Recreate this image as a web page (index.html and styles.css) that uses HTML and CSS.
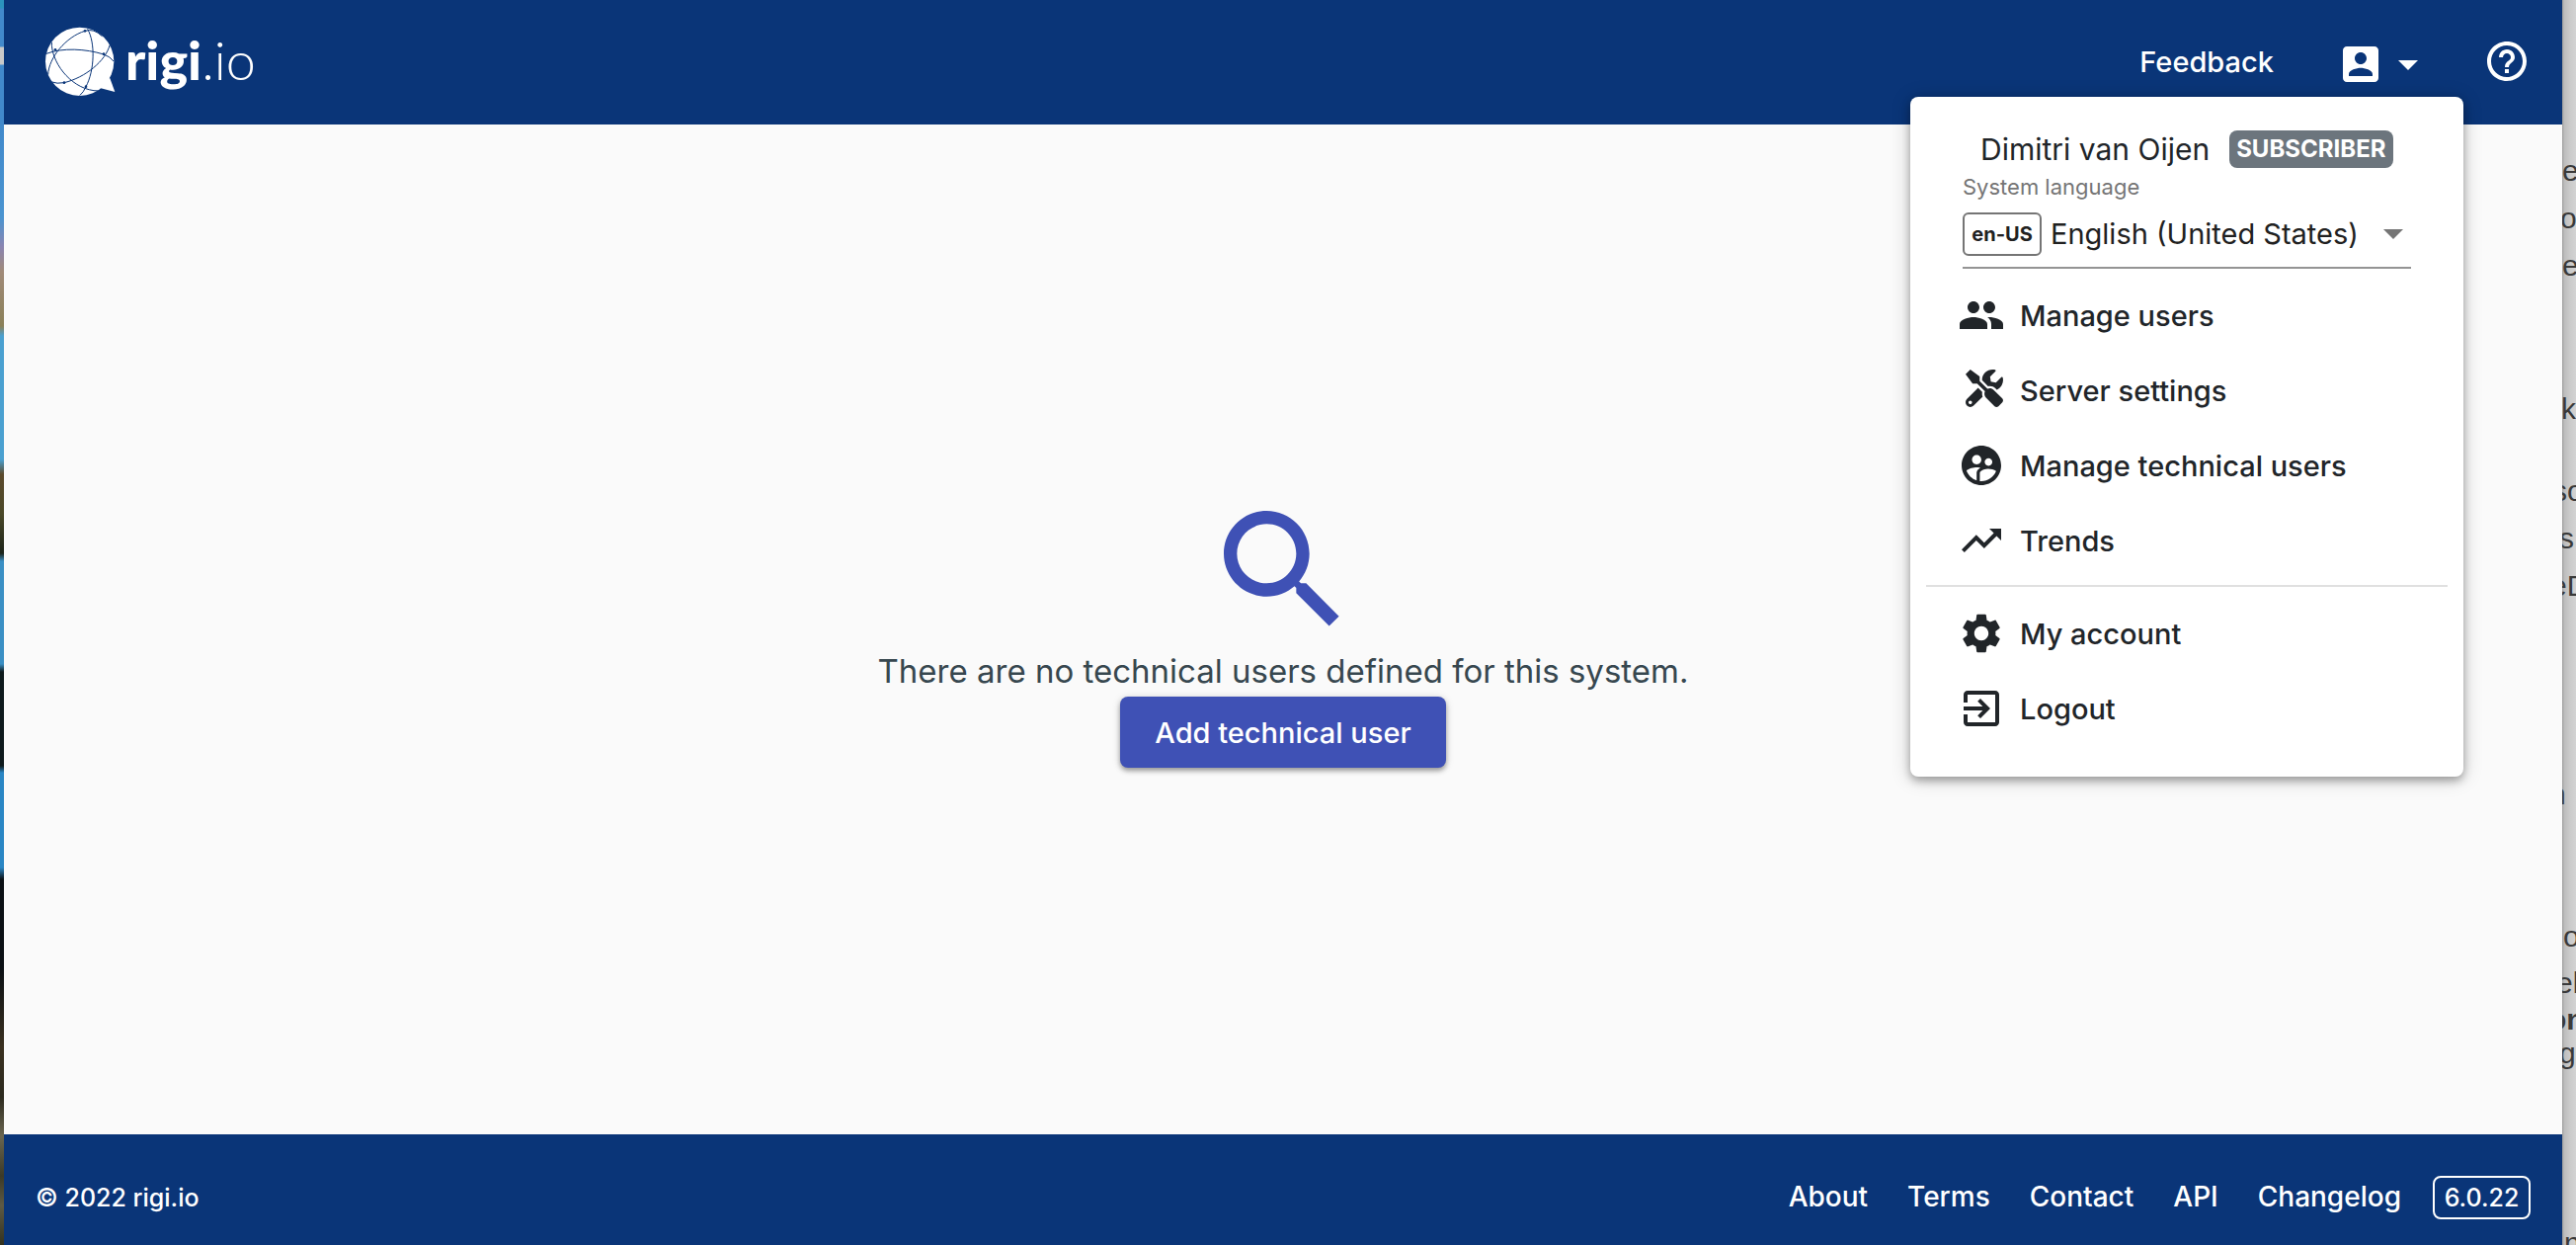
FILE: index.html
```html
<!DOCTYPE html>
<html lang="en">
<head>
<meta charset="utf-8">
<meta name="viewport" content="width=device-width, initial-scale=1">
<title>Technical users - rigi.io</title>
<link rel="stylesheet" href="styles.css">
</head>
<body>
<div class="wallpaper" aria-hidden="true"></div>

<div class="app">
  <header class="topbar">
    <a class="logo" href="#" aria-label="rigi.io">
      <svg class="logo-mark" viewBox="0 0 270 255" aria-hidden="true">
        <circle cx="122" cy="127" r="104" fill="#fff"/>
        <path fill="#fff" d="M214 178 229 219 186 208 150 170Z"/>
        <g fill="none" stroke="#0a3578" stroke-width="3">
          <path d="M21 103C70 84 140 88 195 105Q215 112 225 126"/>
          <path d="M37 68C35 125 90 205 165 215Q178 218 192 212"/>
          <path d="M26 167C28 115 80 52 138 34Q165 25 190 50"/>
          <path d="M146 28C170 70 167 155 141 203Q134 220 122 230"/>
          <path d="M213 78C200 125 140 175 75 191Q52 195 38 189"/>
        </g>
        <g fill="#0a3578"><circle cx="138" cy="34" r="4"/><circle cx="48" cy="91" r="4"/><circle cx="195" cy="104" r="4"/><circle cx="75" cy="191" r="4"/><circle cx="141" cy="203" r="4"/></g>
      </svg>
      <span class="logo-text"><b>rigi</b><span>.io</span></span>
    </a>
    <nav class="top-actions" aria-label="Main">
      <a class="feedback" href="#">Feedback</a>
      <button class="account" type="button" aria-label="Account menu" aria-expanded="true">
        <svg class="icon" viewBox="0 0 24 24"><path d="M3 5v14c0 1.100.89 2 2 2h14c1.100 0 2-.9 2-2V5c0-1.100-.9-2-2-2H5c-1.110 0-2 .9-2 2zm12 4c0 1.660-1.340 3-3 3s-3-1.340-3-3 1.340-3 3-3 3 1.340 3 3zm-9 8c0-2 4-3.100 6-3.100s6 1.100 6 3.100v1H6v-1z"/></svg>
        <svg class="icon" viewBox="0 0 24 24"><path d="M7 10l5 5 5-5z"/></svg>
      </button>
      <button class="help" type="button" aria-label="Help">
        <svg class="icon" viewBox="0 0 24 24"><path d="M11 18h2v-2h-2v2zm1-16C6.480 2 2 6.480 2 12s4.480 10 10 10 10-4.480 10-10S17.520 2 12 2zm0 18c-4.410 0-8-3.590-8-8s3.590-8 8-8 8 3.590 8 8-3.590 8-8 8zm0-14c-2.210 0-4 1.790-4 4h2c0-1.100.9-2 2-2s2 .9 2 2c0 2-3 1.750-3 5h2c0-2.250 3-2.500 3-5 0-2.210-1.790-4-4-4z"/></svg>
      </button>
    </nav>

    <div class="menu">
      <div class="user"><span class="user-name">Dimitri van Oijen</span><span class="role">SUBSCRIBER</span></div>
      <div class="language">
        <label for="language">System language</label>
        <div class="language-field">
          <span class="locale">en-US</span>
          <select id="language"><option>English (United States)</option></select>
          <svg class="caret" viewBox="0 0 20 10" aria-hidden="true"><path d="M0 0h20L10 10z"/></svg>
        </div>
      </div>
      <ul class="menu-list">
        <li><a href="#"><svg class="icon" viewBox="0 0 24 24"><path d="M16 11c1.660 0 2.990-1.340 2.990-3S17.660 5 16 5c-1.660 0-3 1.340-3 3s1.340 3 3 3zm-8 0c1.660 0 2.990-1.340 2.990-3S9.660 5 8 5C6.340 5 5 6.340 5 8s1.340 3 3 3zm0 2c-2.330 0-7 1.170-7 3.500V19h14v-2.500c0-2.330-4.670-3.500-7-3.500zm8 0c-.29 0-.62.02-.97.05 1.160.84 1.970 1.970 1.970 3.450V19h6v-2.500c0-2.330-4.670-3.500-7-3.500z"/></svg>Manage users</a></li>
        <li><a href="#"><svg class="icon" viewBox="-108 -40 647 647"><path d="M501.100 395.700L384 278.600c-23.100-23.100-57.600-27.600-85.400-13.900L192 158.100V96L64 0 0 64l96 128h62.100l106.600 106.600c-13.600 27.800-9.200 62.300 13.900 85.400l117.100 117.100c14.600 14.600 38.200 14.600 52.700 0l52.700-52.700c14.500-14.600 14.500-38.200 0-52.700zM331.700 225c28.300 0 54.900 11 74.900 31l19.400 19.400c15.800-6.900 30.800-16.500 43.800-29.500 37.100-37.100 49.700-89.300 37.900-136.700-2.200-9-13.500-12.100-20.100-5.500l-74.400 74.400-67.900-11.300L334 98.900l74.400-74.400c6.600-6.600 3.400-17.900-5.700-20.200-47.400-11.700-99.600.9-136.600 37.900-28.500 28.500-41.900 66.100-41.200 103.600l82.100 82.100c8.100-1.900 16.500-2.900 24.700-2.900zm-103.900 82l-56.700-56.700L18.700 402.800c-25 25-25 65.500 0 90.500s65.500 25 90.500 0l123.600-123.600c-7.600-19.900-9.900-41.600-5-62.700zM64 472c-13.200 0-24-10.800-24-24 0-13.300 10.700-24 24-24s24 10.700 24 24c0 13.200-10.700 24-24 24z"/></svg>Server settings</a></li>
        <li><a href="#"><svg class="icon" viewBox="0 0 24 24"><path d="M12 2C6.480 2 2 6.480 2 12s4.480 10 10 10 10-4.480 10-10S17.520 2 12 2zm3.610 6.340c1.070 0 1.930.86 1.930 1.930 0 1.070-.86 1.930-1.930 1.930-1.070 0-1.930-.86-1.930-1.930-.01-1.070.86-1.930 1.930-1.930zm-6-1.580c1.300 0 2.360 1.060 2.360 2.360 0 1.300-1.060 2.360-2.360 2.360s-2.360-1.060-2.360-2.360c0-1.310 1.050-2.360 2.360-2.360zm0 9.130v3.750c-2.400-.75-4.300-2.600-5.140-4.960 1.050-1.120 3.670-1.690 5.140-1.690.53 0 1.200.08 1.900.22-1.640.87-1.900 2.020-1.900 2.680zM12 20c-.27 0-.53-.01-.79-.04v-4.070c0-1.420 2.940-2.130 4.400-2.130 1.070 0 2.920.39 3.840 1.150-1.170 2.970-4.060 5.090-7.450 5.090z"/></svg>Manage technical users</a></li>
        <li><a href="#"><svg class="icon" viewBox="0 0 24 24"><path d="M16 6l2.290 2.290-4.880 4.880-4-4L2 16.590 3.410 18l6-6 4 4 6.300-6.290L22 12V6z"/></svg>Trends</a></li>
      </ul>
      <hr>
      <ul class="menu-list">
        <li><a href="#"><svg class="icon" viewBox="0 0 24 24"><path d="M19.140 12.940c.04-.3.06-.61.06-.94 0-.32-.02-.64-.07-.94l2.030-1.580c.18-.14.23-.41.12-.61l-1.920-3.320c-.12-.22-.37-.29-.59-.22l-2.390.96c-.5-.38-1.030-.7-1.620-.94l-.36-2.540c-.04-.24-.24-.41-.48-.41h-3.840c-.24 0-.43.17-.47.41l-.36 2.540c-.59.24-1.130.57-1.620.94l-2.390-.96c-.22-.08-.47 0-.59.22L2.740 8.870c-.12.21-.08.47.12.61l2.030 1.580c-.05.3-.09.63-.09.94s.02.64.07.94l-2.030 1.580c-.18.14-.23.41-.12.61l1.920 3.320c.12.22.37.29.59.22l2.390-.96c.5.38 1.030.7 1.620.94l.36 2.540c.05.24.24.41.48.41h3.840c.24 0 .44-.17.47-.41l.36-2.540c.59-.24 1.130-.56 1.620-.94l2.390.96c.22.08.47 0 .59-.22l1.920-3.320c.12-.22.07-.47-.12-.61l-2.010-1.580zM12 15.600c-1.980 0-3.600-1.620-3.600-3.600s1.620-3.600 3.600-3.600 3.600 1.620 3.600 3.600-1.620 3.600-3.600 3.600z"/></svg>My account</a></li>
        <li><a href="#"><svg class="icon" viewBox="0 0 24 24"><path d="M10.090 15.590L11.500 17l5-5-5-5-1.410 1.410L12.670 11H3v2h9.670l-2.580 2.590zM19 3H5c-1.110 0-2 .9-2 2v4h2V5h14v14H5v-4H3v4c0 1.100.89 2 2 2h14c1.100 0 2-.9 2-2V5c0-1.100-.9-2-2-2z"/></svg>Logout</a></li>
      </ul>
    </div>
  </header>

  <main class="empty">
    <svg class="empty-icon" viewBox="0 0 24 24" aria-hidden="true"><path d="M15.500 14h-.79l-.28-.27C15.410 12.590 16 11.110 16 9.500 16 5.910 13.090 3 9.500 3S3 5.910 3 9.500 5.910 16 9.500 16c1.610 0 3.090-.59 4.230-1.570l.27.28v.79l5 4.990L20.490 19l-4.990-5zm-6 0C7.010 14 5 11.990 5 9.500S7.010 5 9.500 5 14 7.010 14 9.500 11.990 14 9.500 14z"/></svg>
    <p>There are no technical users defined for this system.</p>
    <button class="primary" type="button">Add technical user</button>
  </main>

  <footer class="footer">
    <span>© 2022 rigi.io</span>
    <nav class="footer-links" aria-label="Footer">
      <a href="#">About</a>
      <a href="#">Terms</a>
      <a href="#">Contact</a>
      <a href="#">API</a>
      <a href="#">Changelog</a>
    </nav>
    <span class="version">6.0.22</span>
  </footer>
</div>

<div class="behind" aria-hidden="true">
  <span class="l1">e</span>
  <span class="l2">o</span>
  <span class="l3">e</span>
  <span class="l4">k</span>
  <span class="l5">so</span>
  <span class="l6">s</span>
  <span class="l7">eD</span>
  <span class="l8">n</span>
  <span class="l9">o</span>
  <span class="l10">el</span>
  <span class="l11">on</span>
  <span class="l12">g</span>
  <span class="l13">n</span>
</div>
</body>
</html>
```
FILE: styles.css
```css
* { box-sizing: border-box; }

body {
  margin: 0;
  min-height: 100vh;
  display: flex;
  font-family: Inter, "Open Sans", sans-serif;
  font-size: 29px;
  font-weight: 500;
  color: #212529;
}

a { color: inherit; text-decoration: none; }
button {
  border: 0;
  padding: 0;
  background: none;
  font: inherit;
  color: inherit;
  cursor: pointer;
}
.icon { flex: none; display: block; width: 48px; height: 48px; fill: currentColor; }

/* desktop showing at the left edge of the window */
.wallpaper {
  flex: none;
  width: 4px;
  background: linear-gradient(#2b93bd 0 8px, #4189cb 9px 47px, #c9c9c9 48px 65px, #4189cb 66px 130px, #4a94d0 220px, #8a84b0 250px, #a08a78 275px, #8a8058 330px, #4aa0d0 340px 465px, #5c4a2c 480px, #4a4828 520px, #1c241a 560px, #3a8fc4 568px 672px, #0e1a1c 680px 775px, #2a86c4 782px 878px, #0b1014 890px 980px, #3a3020 1060px, #2c2a1e 1110px, #6a6650 1150px, #3c3a26 1190px, #5e5a44 1220px, #33321f 1260px);
}

.app {
  flex: 1;
  min-width: 0;
  min-height: 100vh;
  display: flex;
  flex-direction: column;
  background: #fafafa;
}

.topbar {
  position: relative;
  display: flex;
  align-items: center;
  justify-content: space-between;
  height: 126px;
  padding: 0 32px 2px 36px;
  background: #0a3578;
  color: #fff;
}
.logo { display: flex; align-items: center; }
.logo-mark { width: 90px; height: 85px; }
.logo-text { margin-left: -3px; padding-bottom: 3px; font: 54px/60px Lato, sans-serif; }
.logo-text b { font-weight: 900; }
.logo-text span { font-weight: 300; }

.top-actions { display: flex; align-items: center; }
.account { display: flex; margin: 6px 52px 0 64px; }

.menu {
  position: absolute;
  z-index: 1;
  top: 98px;
  right: 100px;
  width: 560px;
  padding: 34px 0 31px;
  border-radius: 8px;
  background: #fff;
  color: #212529;
  box-shadow: 0 4px 8px rgba(0, 0, 0, .3), 0 2px 20px rgba(0, 0, 0, .2);
}
.user { display: flex; align-items: center; height: 38px; padding-left: 71px; }
.user-name { font-size: 30px; font-weight: 400; }
.role {
  margin-left: 20px;
  padding: 0 7px;
  border-radius: 8px;
  background: #6c757d;
  color: #fff;
  font-size: 24px;
  font-weight: 700;
  line-height: 38px;
}
.language { margin: 6px 53px 0; border-bottom: 2px solid #949494; }
.language label {
  display: block;
  color: #757575;
  font-size: 22px;
  font-weight: 400;
  line-height: 26px;
}
.language-field { display: flex; align-items: center; padding: 13px 8px 11px 0; }
.locale {
  width: 80px;
  border: 2px solid #757575;
  border-radius: 6px;
  color: #212121;
  font-size: 20px;
  font-weight: 700;
  line-height: 40px;
  text-align: center;
}
.language select {
  appearance: none;
  flex: 1;
  min-width: 0;
  margin-left: 9px;
  padding: 0 0 2px;
  border: 0;
  background: none;
  color: #212121;
  font: inherit;
  font-weight: 400;
}
.caret { width: 20px; height: 10px; fill: #757575; }

.menu-list { margin: 9px 0 0; padding: 0; list-style: none; }
.menu-list a {
  display: flex;
  align-items: center;
  gap: 15px;
  height: 76px;
  padding: 0 48px;
}
.menu hr { height: 2px; margin: 7px 16px 0; border: 0; background: #e0e0e0; }

.empty {
  flex: 1;
  display: flex;
  flex-direction: column;
  align-items: center;
  justify-content: center;
}
.empty-icon { width: 160px; height: 160px; fill: #3f51b5; }
.empty p {
  margin: 0 0 4px;
  color: #37474f;
  font-size: 33px;
  font-weight: 400;
  line-height: 44px;
}
.primary {
  height: 72px;
  min-width: 330px;
  padding: 0 32px;
  border-radius: 8px;
  background: #3f51b5;
  color: #fff;
  box-shadow: 0 3px 5px rgba(0, 0, 0, .35), 0 1px 10px rgba(0, 0, 0, .12);
}

.footer {
  display: flex;
  align-items: center;
  height: 112px;
  padding: 16px 32px 0 32px;
  background: #0a3578;
  color: #fff;
  font-size: 25px;
}
.footer-links { display: flex; gap: 40px; margin-left: auto; padding-bottom: 2px; font-size: 28px; }
.version {
  min-width: 99px;
  margin-left: 32px;
  border: 2px solid #fff;
  border-radius: 8px;
  line-height: 40px;
  text-align: center;
}

/* another window, partly covered by the app at the right edge */
.behind {
  position: relative;
  flex: none;
  width: 14px;
  overflow: hidden;
  background: linear-gradient(90deg, #9a9a9a, #bcbcbc 2px, #cbcbcb 8px, #d3d3d3);
  color: #3a3a3a;
  font: 30px/34px "Liberation Sans", Arial, sans-serif;
}
.behind span { position: absolute; left: 0; }
.behind .l1 { top: 156px; }
.behind .l2 { top: 204px; left: -2px; }
.behind .l3 { top: 252px; }
.behind .l4 { top: 397px; left: -1px; }
.behind .l5 { top: 480px; left: -10px; }
.behind .l6 { top: 528px; left: -3px; }
.behind .l7 { top: 576px; left: -12px; }
.behind .l8 { top: 787px; left: -13px; }
.behind .l9 { top: 931px; left: 1px; }
.behind .l10 { top: 978px; left: -6px; }
.behind .l11 { top: 1015px; left: -14px; font-weight: 700; }
.behind .l12 { top: 1049px; left: -3px; }
.behind .l13 { top: 1241px; left: 2px; }
```
